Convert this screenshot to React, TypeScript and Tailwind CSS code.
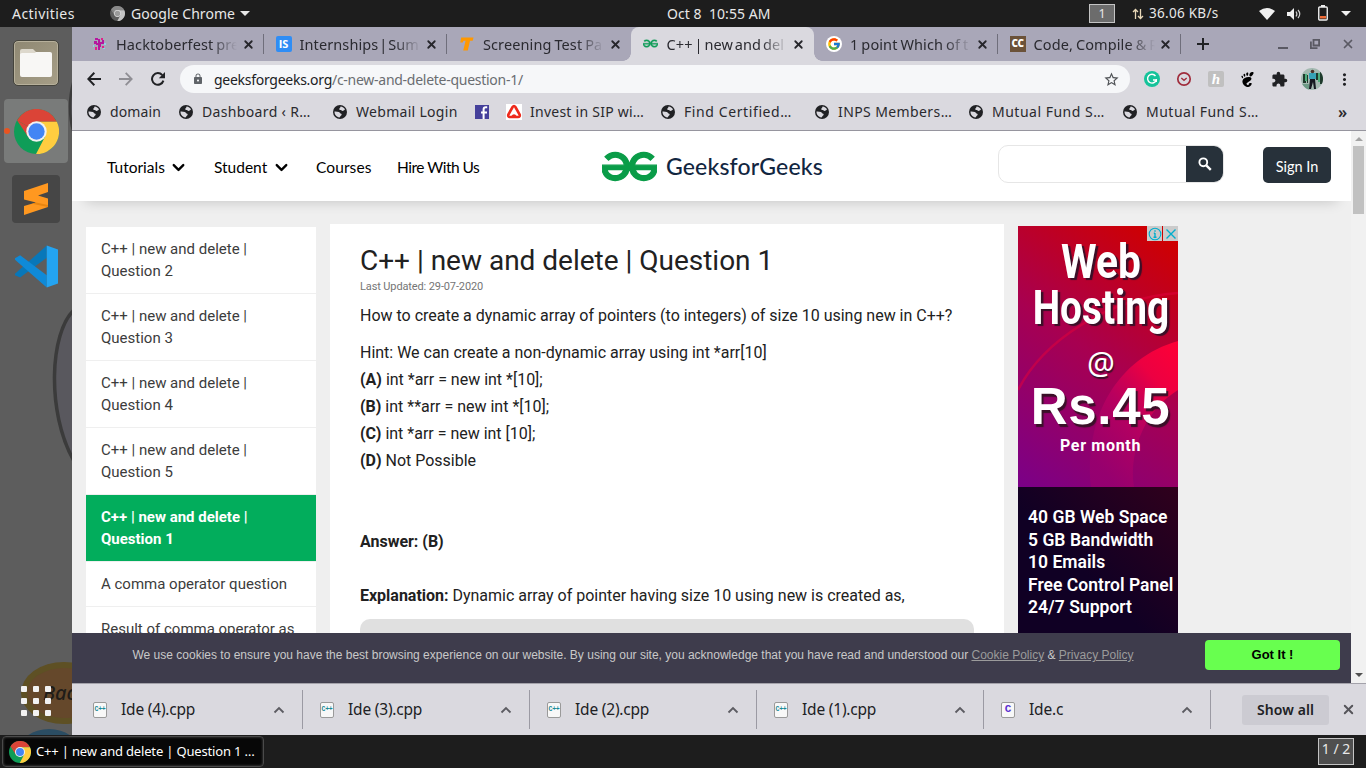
import type { ReactNode } from "react";
import { MdLock, MdStarBorder, MdExtension, MdMoreVert } from "react-icons/md";
import { FcGoogle } from "react-icons/fc";
import { SiGeeksforgeeks, SiGnome } from "react-icons/si";
import { X, ChevronDown } from "lucide-react";

function ChromeLogo({ className, gray = false }: { className: string; gray?: boolean }) {
  const c = gray ? ["#8a8a8a", "#5c5c5c", "#c4c4c4", "#dedede", "#9a9a9a"] : ["#db4437", "#0f9d58", "#ffcd40", "#f1f1f1", "#4285f4"];
  return (
    <svg viewBox="0 0 48 48" className={className}>
      <circle cx="24" cy="24" r="24" fill={c[1]} />
      <path d="M24 24 L3.2 12 A24 24 0 0 1 45.7 13.5 L24 13.5 Z" fill={c[0]} />
      <path d="M3.2 12 L14.8 29.2 L24 24 Z" fill={c[0]} />
      <path d="M24 13.5 H45.7 A24 24 0 0 1 23.5 48 L33.2 29.3 Z" fill={c[2]} />
      <circle cx="24" cy="24" r="10.9" fill={c[3]} />
      <circle cx="24" cy="24" r="8.7" fill={c[4]} />
    </svg>
  );
}

function Globe() {
  return (
    <svg viewBox="0 0 14 14" className="size-[14px] shrink-0">
      <circle cx="7" cy="7" r="7" fill="#202124" />
      <path d="M7.6 1.5 C9.4 1.6 11.3 2.8 12 4.4 C11.2 5 10.4 5.9 9.3 5.9 C8.6 5.9 8.7 5.1 7.9 5 C6.9 5 6.1 4.9 6.2 4 C6.3 3 7.5 2.9 7.6 1.5 Z" fill="#dad9df" />
      <path d="M1.5 6.6 C3 6.5 4.6 6.7 5.9 7.1 C6.8 7.4 6.6 8.3 7.5 8.4 C8.9 8.6 9.1 9.9 8.1 10.5 C7.1 11 7.4 12 6.4 12.5 C3.6 12.2 1.4 9.8 1.5 6.6 Z" fill="#dad9df" />
    </svg>
  );
}

const tabs: { title: string; icon: ReactNode; active?: boolean; line?: boolean; spacing?: string }[] = [
  {
    title: "Hacktoberfest pre",
    line: true,
    icon: (
      <svg viewBox="0 0 16 16" className="size-4">
        <path d="M3 2h3v2H3zM2 5h3v2h1V3h2v3h2V4h2v4H9v3H8v3H6V9H4V8H2z" fill="#b5179e" />
        <path d="M9 2h2v2H9zM10 10h2v2h-2zM3 11h2v3H3z" fill="#e0218a" />
        <path d="M12 7h2v2h-2zM11 12h2v1h-2zM1 9h1v2H1z" fill="#8fd0ea" />
      </svg>
    ),
  },
  { title: "Internships | Sum", spacing: "[word-spacing:-3px]", line: true, icon: <div className="flex size-4 items-center justify-center rounded-[2px] bg-[#2f8df5] font-['Open_Sans',sans-serif] text-[11px] font-bold text-white">IS</div> },
  {
    title: "Screening Test Pa",
    icon: (
      <svg viewBox="0 0 16 16" className="size-4">
        <path d="M2.2 1.5 H14.5 L13.7 4.7 H11 L8.8 14.5 H4.2 L6.6 4.7 H4.5 L3.8 6.5 H1.2 Z" fill="#ff9800" />
      </svg>
    ),
  },
  { title: "C++ | new and del", spacing: "[word-spacing:-2px]", active: true, icon: <SiGeeksforgeeks className="size-[15px] text-[#0f9d58]" stroke="#0f9d58" strokeWidth={0.6} /> },
  { title: "1 point Which of t", line: true, icon: <div className="flex size-4 items-center justify-center rounded-full bg-white"><FcGoogle className="size-[14px]" /></div> },
  { title: "Code, Compile & R", line: true, icon: <div className="flex size-4 items-center justify-center bg-[#6b5239] pb-px font-['Open_Sans',sans-serif] text-[10px] font-extrabold tracking-[-0.5px] text-white">CC</div> },
];

function Tab({ title, icon, active, line, spacing = "[word-spacing:-0.9px]" }: { title: string; icon: ReactNode; active?: boolean; line?: boolean; spacing?: string }) {
  return (
    <div className={active ? "relative flex h-[34px] w-[183.5px] items-center rounded-t-[8px] bg-[#dad9df] pl-3" : "relative flex h-[34px] w-[183.5px] items-center pl-3"}>
      {active && (
        <>
          <div className="absolute bottom-0 -left-2 size-2 bg-[radial-gradient(circle_at_0_0,#a9a7b8_7.5px,#dad9df_8px)]" />
          <div className="absolute -right-2 bottom-0 size-2 bg-[radial-gradient(circle_at_100%_0,#a9a7b8_7.5px,#dad9df_8px)]" />
        </>
      )}
      <div className="size-4 shrink-0">{icon}</div>
      <div className={`ml-2 w-[121px] overflow-hidden whitespace-nowrap text-[14.5px] leading-[20px] tracking-[0.1px] text-[#2a2a30] [mask-image:linear-gradient(to_right,black_78%,transparent)] ${spacing}`}>{title}</div>
      <X className="ml-[4.5px] size-[13px] shrink-0 text-[#26262b]" strokeWidth={3.3} />
      {line && <div className="absolute top-[7px] right-0 h-5 w-px bg-[#6f6e7b]" />}
    </div>
  );
}

function Bookmark({ label, width, icon, tracking = "tracking-[0.25px]" }: { label: string; width: string; icon?: ReactNode; tracking?: string }) {
  return (
    <div className={`flex shrink-0 items-center ${width}`}>
      {icon ?? <Globe />}
      <span className={`ml-[9px] whitespace-nowrap ${tracking}`}>{label}</span>
    </div>
  );
}

const downloads = ["Ide (4).cpp", "Ide (3).cpp", "Ide (2).cpp", "Ide (1).cpp", "Ide.c"];

function Download({ name }: { name: string }) {
  const cpp = name.endsWith("cpp");
  return (
    <div className="flex h-[39px] w-[227px] shrink-0 items-center border-r border-[#9b9aa3] pl-[17px]">
      <div className="flex h-4 w-[14px] items-center justify-center rounded-[2px] border border-[#9a9a9a] bg-[#f8f8f8] font-['Liberation_Mono',monospace] font-bold">
        {cpp ? <span className="text-[6.5px] tracking-[-0.3px] text-[#1a8a96]">C++</span> : <span className="text-[11px] text-[#5a2fd0]">C</span>}
      </div>
      <span className="ml-[14px] w-[152px] text-[15.5px] tracking-[-0.2px] text-[#202124]">{name}</span>
      <svg viewBox="0 0 12 8" className="h-[8px] w-3">
        <path d="M1.5 6.5 L6 2 L10.5 6.5" fill="none" stroke="#5c5c62" strokeWidth="1.8" />
      </svg>
    </div>
  );
}

function Dock() {
  return (
    <aside className="relative flex w-[72px] shrink-0 flex-col items-center overflow-hidden bg-[#5d5d5d]">
      <svg viewBox="0 0 72 708" className="absolute inset-0 h-[708px] w-[72px]">
        <path d="M74 283 C50 305 46 385 74 434" fill="#59585e" stroke="#3b3b3b" strokeWidth="3.5" />
        <ellipse cx="108" cy="80" rx="38" ry="60" fill="#59585e" stroke="#3b3b3b" strokeWidth="2.5" />
        <ellipse cx="64" cy="666" rx="43" ry="31" fill="#5e5024" />
        <ellipse cx="64" cy="666" rx="37" ry="25" fill="#65482b" />
        <ellipse cx="49" cy="724" rx="30" ry="22" fill="#2b4d63" />
        <text x="43" y="673" fontFamily="Noto Sans" fontStyle="italic" fontWeight="500" fontSize="20" fill="#201c18">Bac</text>
      </svg>
      <div className="relative mt-[13px] flex size-[46px] items-center justify-center rounded-[5px] border border-[#45443c] bg-linear-to-br from-[#8f8873] to-[#a69e87] shadow-[inset_0_0_0_1px_#b7b09b]">
        <svg viewBox="0 0 32 28" className="h-7 w-8">
          <path d="M0 2 Q0 0 2 0 H13 L16 3 V9 H0 Z" fill="#ddd8cc" />
          <rect y="4" width="32" height="24" rx="2" fill="#f8f7f5" />
          <path d="M0 6 Q0 5 2 5 H14 L16 3 H30 Q32 3 32 5 V10 H0Z" fill="#f8f7f5" />
        </svg>
      </div>
      <div className="relative mt-[13px] flex h-16 w-16 items-center justify-center rounded-[4px] bg-[#797b7a]">
        <ChromeLogo className="size-[45px]" />
        <span className="absolute top-[29px] left-0 size-[6px] rounded-full bg-[#e95420]" />
      </div>
      <div className="relative mt-3 flex size-12 items-center justify-center rounded-[4px] bg-[#464646]">
        <svg viewBox="0 0 24 32" className="h-8 w-6">
          <path d="M0 8 L24 0 V9 L14 12.5 L24 15.5 V24 L0 32 V23 L12 19.5 L0 16.5 Z" fill="#ff9820" />
          <path d="M12 19.5 L24 22 V24 L8 20.7 Z" fill="#e9850f" />
        </svg>
      </div>
      <svg viewBox="0 0 42 42" className="relative mt-[22px] size-[43px]">
        <path d="M0 28 L31 0.5 V12.5 L5 31.8 L0 29.5 Z" fill="#0877b9" />
        <path d="M0 13 L5 10 L31 29.5 V41.5 L0 14.5 Z" fill="#0f8ad8" />
        <path d="M31 0.5 L42 4.5 V37.5 L31 41.5 Z" fill="#24a4f1" />
      </svg>
      <div className="relative mt-auto mb-[19px] grid grid-cols-3 gap-[6px]">
        {[0, 1, 2, 3, 4, 5, 6, 7, 8].map((i) => (
          <span key={i} className="size-[6px] rounded-[1px] bg-[#f2f2f2]" />
        ))}
      </div>
    </aside>
  );
}

const sidebar = [
  "C++ | new and delete | Question 2",
  "C++ | new and delete | Question 3",
  "C++ | new and delete | Question 4",
  "C++ | new and delete | Question 5",
  "C++ | new and delete | Question 1",
  "A comma operator question",
  "Result of comma operator as",
];

function Advert() {
  return (
    <div className="relative mt-[25px] ml-[14px] w-40 shrink-0 text-center text-white">
      <div className="relative h-[261px] overflow-hidden bg-[linear-gradient(35deg,#7a0088_0%,#a80050_50%,#cf0000_95%)]">
        <svg viewBox="0 0 160 261" className="absolute inset-0 h-[261px] w-40">
          <defs>
            <linearGradient id="arc" x1="1" y1="0" x2="0.3" y2="1">
              <stop offset="0" stopColor="#ff0035" />
              <stop offset="0.3" stopColor="#ec0042" />
              <stop offset="0.6" stopColor="#bd0060" stopOpacity="0.8" />
              <stop offset="1" stopColor="#a0006c" stopOpacity="0.5" />
            </linearGradient>
          </defs>
          <path d="M160 115 C100 132 66 190 73 261 H116 C110 222 130 182 160 164 Z" fill="url(#arc)" />
          <path d="M0 164 C25 115 90 72 160 67" fill="none" stroke="#e0003c" strokeOpacity="0.55" strokeWidth="2.5" />
        </svg>
        <div className="relative h-[261px] font-['Roboto',sans-serif] font-bold">
          <div className="h-[13px]" />
          <div className="ml-[6px] h-[46px] scale-x-[0.84] text-[48.5px] leading-[46px] whitespace-nowrap [text-shadow:3px_2px_1px_#3a1028]">Web</div>
          <div className="ml-[-14px] h-[46px] w-[194px] scale-x-[0.8] text-[48.5px] leading-[46px] whitespace-nowrap [text-shadow:3px_2px_1px_#3a1028]">Hosting</div>
          <div className="mt-[12px] h-10 pl-[6px] font-['Noto_Sans',sans-serif] text-[31px] leading-[38px] font-normal [text-shadow:1px_2px_1px_#3a1028]">@</div>
          <div className="h-[48px] pl-[5px] font-['Liberation_Sans',sans-serif] text-[51px] leading-[48px] tracking-[0.7px] [text-shadow:2px_3px_1px_#3a1028]">Rs.45</div>
          <div className="pt-[3px] pl-[5px] text-[16px] leading-[24px] tracking-[0.7px]">Per month</div>
        </div>
      </div>
      <div className="h-[200px] bg-[linear-gradient(45deg,#100024_50%,#30001c)] pt-[19px] pl-[10px] text-left font-['Roboto',sans-serif] text-[17.5px] leading-[22.5px] font-semibold tracking-[0.03px] whitespace-nowrap">
        <div>40 GB Web Space</div>
        <div>5 GB Bandwidth</div>
        <div>10 Emails</div>
        <div>Free Control Panel</div>
        <div>24/7 Support</div>
      </div>
      <div className="absolute top-0 right-0 flex gap-px">
        <div className="flex size-[15px] items-center justify-center bg-[#cbcbcb]">
          <svg viewBox="0 0 14 14" className="size-[14px]" fill="none" stroke="#00aecd">
            <circle cx="7" cy="7" r="5.8" strokeWidth="1.1" />
            <path d="M7 3.2v1.5M7 6v4.3M5.8 6.2h1.2M5.5 10.3h3" strokeWidth="1.4" />
          </svg>
        </div>
        <div className="flex size-[15px] items-center justify-center bg-[#cbcbcb]">
          <svg viewBox="0 0 14 14" className="size-[14px]" fill="none" stroke="#00aecd" strokeWidth="1.4">
            <path d="M2.5 2.5 L11.5 11.5 M11.5 2.5 L2.5 11.5" />
          </svg>
        </div>
      </div>
    </div>
  );
}

function Page() {
  return (
    <div className="flex h-[552px]">
      <div className="flex w-[1279px] flex-col">
        <div className="flex min-h-0 flex-1 flex-col overflow-hidden bg-[#efefef]">
          <header className="z-10 flex h-[70px] shrink-0 items-center bg-white pl-[35px] font-['Lato',sans-serif] text-[15.5px] text-black shadow-[0_14px_14px_-14px_rgba(0,0,0,0.2)]">
            <div className="mt-[3px] flex w-[107px] items-center"><span className="w-[62px]">Tutorials</span><ChevronDown className="size-[19px]" strokeWidth={3} /></div>
            <div className="mt-[3px] flex w-[102px] items-center"><span className="w-[58px]">Student</span><ChevronDown className="size-[19px]" strokeWidth={3} /></div>
            <span className="mt-[3px] w-[81px] tracking-[0.1px]">Courses</span>
            <span className="mt-[3px] w-[205px] tracking-[-0.5px]">Hire With Us</span>
            <SiGeeksforgeeks className="size-[55px] shrink-0 text-[#0a9c48]" stroke="#0a9c48" strokeWidth={0.55} />
            <span className="ml-[9px] w-[332px] text-[23px] font-medium tracking-[0.15px] text-[#12263f]">GeeksforGeeks</span>
            <div className="mb-[5px] flex h-[38px] w-[226px] shrink-0 overflow-hidden rounded-[10px] border border-[#e6e6e6]">
              <div className="w-[187px]" />
              <div className="flex flex-1 items-center justify-center bg-[#27313a]">
                <svg viewBox="0 0 14 14" className="size-[14px]" fill="none" stroke="white">
                  <circle cx="5.3" cy="5.3" r="3.9" strokeWidth="1.9" />
                  <path d="M8.3 8.3 L12.8 12.8" strokeWidth="2.4" />
                </svg>
              </div>
            </div>
            <div className="mb-[2px] ml-[39px] flex h-9 w-[68px] items-center justify-center rounded-[5px] bg-[#27313a] pt-[3px] text-[14.5px] text-white">Sign In</div>
          </header>
          <div className="flex flex-1">
            <nav className="mt-[26px] ml-[14px] w-[230px] shrink-0 font-['Roboto',sans-serif] text-[15px] leading-[22px] text-[#3c3c3c]">
              {sidebar.map((t, i) => (
                <div key={t} className={i === 4 ? "border-b border-[#efefef] bg-[#02ad5c] py-[11px] pr-[50px] pl-[15px] font-bold text-white" : i < 4 ? "border-b border-[#efefef] bg-white py-[11px] pr-[50px] pl-[15px]" : "border-b border-[#efefef] bg-white py-[11px] pl-[15px]"}>
                  {t}
                </div>
              ))}
            </nav>
            <main className="mt-[23px] ml-[14px] w-[674px] shrink-0 bg-white px-[30px] pt-[19px] font-['Roboto',sans-serif] text-[16px] leading-[27px] tracking-[-0.01px] text-[#212121]">
              <h1 className="text-[28px] leading-[36px] tracking-[-0.01px]">C++ | new and delete | Question 1</h1>
              <div className="text-[11px] leading-4 tracking-[-0.12px] text-[#757575]">Last Updated: 29-07-2020</div>
              <p className="mt-[7px]">How to create a dynamic array of pointers (to integers) of size 10 using new in C++?</p>
              <p className="mt-[10px]">Hint: We can create a non-dynamic array using int *arr[10]</p>
              <p><b>(A)</b> int *arr = new int *[10];</p>
              <p><b>(B)</b> int **arr = new int *[10];</p>
              <p><b>(C)</b> int *arr = new int [10];</p>
              <p><b>(D)</b> Not Possible</p>
              <p className="mt-[54px] font-bold">Answer: (B)</p>
              <p className="mt-[27px]"><b>Explanation:</b> Dynamic array of pointer having size 10 using new is created as,</p>
              <div className="mt-[10px] h-20 rounded-[10px] bg-[#e0e0e0]" />
            </main>
            <Advert />
          </div>
        </div>
        <div className="flex h-[50px] shrink-0 bg-[#3e3c4c] pl-[60.5px] font-['Liberation_Sans',sans-serif] text-[12px] text-[#c9c9c9]">
          <p className="mt-[14px] w-[1072.5px] leading-[16px] whitespace-nowrap">
            We use cookies to ensure you have the best browsing experience on our website. By using our site, you acknowledge that you have read and understood our <u className="text-[#9b9b9b]">Cookie Policy</u> &amp; <u className="text-[#9b9b9b]">Privacy Policy</u>
          </p>
          <div className="mt-[7px] flex h-[30px] w-[135px] items-center justify-center rounded-[4px] bg-[#68ff4f] text-[13px] font-bold text-black">Got It !</div>
        </div>
      </div>
      <div className="flex w-[15px] flex-col items-center bg-[#f1f1f1]">
        <div className="mt-[6px] size-0 border-x-4 border-b-4 border-x-transparent border-b-[#a3a3a3]" />
        <div className="mt-[5px] h-[68px] w-[11px] bg-[#c1c1c1]" />
        <div className="mt-auto mb-[6px] size-0 border-x-4 border-t-4 border-x-transparent border-t-[#505050]" />
      </div>
    </div>
  );
}

function Extensions() {
  return (
    <div className="ml-[14px] flex items-center">
      <svg viewBox="0 0 16 16" className="size-4">
        <circle cx="8" cy="8" r="8" fill="#15c39a" />
        <path d="M11.5 5 A4.4 4.4 0 1 0 12.2 9 H9" fill="none" stroke="white" strokeWidth="1.4" />
        <path d="M12.3 8 V11" stroke="white" strokeWidth="1.3" />
      </svg>
      <svg viewBox="0 0 16 16" className="ml-4 size-4" fill="none" stroke="#a02c3c">
        <circle cx="8" cy="8" r="6.2" strokeWidth="1.7" />
        <path d="M5.3 7 L8 9.3 L10.7 7" strokeWidth="1.4" />
      </svg>
      <div className="ml-4 flex size-4 items-center justify-center rounded-[2px] bg-[#c0c0c0] font-['Liberation_Serif',serif] text-[15px] font-bold text-white italic">h</div>
      <SiGnome className="ml-4 size-[15px] text-black" />
      <MdExtension className="ml-4 size-[17px] text-[#202124]" />
      <svg viewBox="0 0 22 22" className="ml-[13px] size-[22px]">
        <clipPath id="av"><circle cx="11" cy="11" r="11" /></clipPath>
        <g clipPath="url(#av)">
          <rect width="22" height="22" fill="#a3b9b0" />
          <path d="M2 6h3v9H2zM6 7h1v8H6zM15 5h2v7h-2zM19 4h3v12h-3z" fill="#1e3a2c" />
          <path d="M4 6h2v7H4zM17 5h2v9h-2z" fill="#4fae7c" />
          <path d="M8 5h7v6H8z" fill="#37a3b6" />
          <path d="M9 11h5l1 10h-2l-1-7-2 7H8z" fill="#15181f" />
          <path d="M0 16h8v6H0z" fill="#6d9a86" />
          <circle cx="11.5" cy="3.5" r="1.8" fill="#4c342a" />
        </g>
      </svg>
      <MdMoreVert className="ml-[12px] size-[19px] text-[#202124]" />
    </div>
  );
}

export default function App() {
  return (
    <div className="flex h-[768px] w-[1366px] flex-col overflow-hidden bg-[#1d1d1d] font-['Noto_Sans',sans-serif]">
      <div className="flex h-[27px] shrink-0 items-center text-[14px] leading-[27px] text-[#e8e8e8]">
        <span className="w-[110px] pl-3 tracking-[0.45px]">Activities</span>
        <ChromeLogo className="size-[15px]" gray />
        <span className="ml-[6px] w-[109px] tracking-[0.05px] whitespace-nowrap">Google Chrome</span>
        <div className="size-0 border-x-[5px] border-t-[5px] border-x-transparent border-t-[#e8e8e8]" />
        <span className="ml-[417px] w-[422px] text-[14px] tracking-[0.05px] whitespace-pre">Oct 8  10:55 AM</span>
        <div className="flex h-[19px] w-[26px] items-center justify-center border border-[#c4c4c4] bg-[#6c6c6c] text-[12.5px]">1</div>
        <svg viewBox="0 0 12 12" className="ml-[17px] size-3" fill="none" stroke="#e8d8b8" strokeWidth="1.3">
          <path d="M3.5 11V1.5M1 4L3.5 1.5L6 4M8.5 1V10.5M6 8L8.5 10.5L11 8" />
        </svg>
        <span className="ml-[5px] w-[110px] text-[13.5px] tracking-[0.28px] whitespace-nowrap">36.06 KB/s</span>
        <svg viewBox="0 0 16 12" className="h-3 w-4"><path d="M0 3 Q8 -3 16 3 L8 12 Z" fill="#f0f0f0" /></svg>
        <svg viewBox="0 0 16 14" className="ml-3 h-[14px] w-4">
          <path d="M0 5h3l4-4v12L3 9H0z" fill="#f0f0f0" />
          <path d="M9 4.5Q10.8 7 9 9.5M11 3Q14.5 7 11 11" fill="none" stroke="#d0d0d0" strokeWidth="1.2" />
        </svg>
        <svg viewBox="0 0 10 16" className="ml-[15px] h-4 w-[10px] -mt-px">
          <rect x="3" width="4" height="2" fill="#eee" />
          <rect x="0.75" y="2" width="8.5" height="13" rx="1" fill="none" stroke="#eee" strokeWidth="1.4" />
          <rect x="2" y="11" width="6" height="2.5" fill="#ee6a35" />
        </svg>
        <div className="ml-[13px] size-0 border-x-[5px] border-t-[5px] border-x-transparent border-t-[#f0f0f0]" />
      </div>

      <div className="flex h-[708px] shrink-0">
        <Dock />
        <div className="flex w-[1294px] flex-col">
          <div className="flex h-[34px] shrink-0 items-center bg-[#a9a7b8] pl-2">
            {tabs.map((t) => <Tab key={t.title} {...t} />)}
            <svg viewBox="0 0 12 12" className="ml-[16px] size-3" stroke="#202124" strokeWidth="2">
              <path d="M6 0V12M0 6H12" />
            </svg>
            <div className="mt-2 ml-[69px] h-[2px] w-[10px] bg-[#5a5963]" />
            <svg viewBox="0 0 10 10" className="ml-[22px] size-[10px]" fill="none" stroke="#5a5963" strokeWidth="1.8">
              <path d="M3.5 0.9H9.1V6.5H3.5ZM0.9 2.5V9.1H7.5" />
            </svg>
            <X className="ml-[21px] size-[14px] text-[#5a5963]" strokeWidth={3} />
          </div>

          <div className="flex h-9 shrink-0 items-center bg-[#dad9df] pl-[15px]">
            <svg viewBox="0 0 14 14" className="size-[14px]" fill="none" stroke="#202124" strokeWidth="2">
              <path d="M14 7H1.5M7.3 0.8L1.3 7L7.3 13.2" />
            </svg>
            <svg viewBox="0 0 14 14" className="ml-[18px] size-[14px]" fill="none" stroke="#8f8e94" strokeWidth="1.8">
              <path d="M0 7H12.5M6.7 0.8L12.7 7L6.7 13.2" />
            </svg>
            <svg viewBox="0 0 14 14" className="ml-[18px] size-[14px]">
              <path d="M12.4 8.6 A5.8 5.8 0 1 1 11.3 3.2" fill="none" stroke="#202124" strokeWidth="2" />
              <path d="M14 0V6.2H7.8Z" fill="#202124" />
            </svg>
            <div className="ml-[15px] flex h-7 w-[950px] shrink-0 items-center rounded-full bg-[#f6f7f9] pr-[10px] pl-3">
              <MdLock className="size-3 text-[#5f6368]" />
              <span className="ml-[10px] text-[14px] tracking-[-0.27px] whitespace-nowrap text-[#6a6d71]"><span className="text-[#202124]">geeksforgeeks.org</span>/c-new-and-delete-question-1/</span>
              <MdStarBorder className="ml-auto size-[17px] text-[#4f5256]" />
            </div>
            <Extensions />
          </div>

          <div className="flex h-[34px] shrink-0 items-center border-b border-[#96959e] bg-[#dad9df] pb-[4px] pl-[15px] text-[14px] text-[#2a2a2e]">
            <Bookmark label="domain" width="w-[92px]" tracking="tracking-[0.1px]" />
            <Bookmark label="Dashboard ‹ R…" width="w-[154px]" tracking="tracking-[0.35px]" />
            <Bookmark label="Webmail Login" width="w-[142px]" tracking="tracking-[0.3px]" />
            <svg viewBox="0 0 14 14" className="mr-[17px] size-[14px]">
              <rect width="14" height="14" fill="#45409b" />
              <path d="M12.2 2.2H10.8C9.200 2.200 8.600 3 8.600 4.400V14M6 7.400H12" fill="none" stroke="white" strokeWidth="2" />
            </svg>
            <Bookmark
              label="Invest in SIP wi…"
              width="w-[155px]"
              tracking="tracking-[0.25px]"
              icon={
                <svg viewBox="0 0 16 16" className="-mr-px size-4 shrink-0">
                  <rect width="16" height="16" fill="white" />
                  <path d="M6.6 3 Q8 1 9.4 3 L13.6 10.5 Q14.4 13 12 13 H4 Q1.6 13 2.4 10.5 Z" fill="white" stroke="#ee2a1c" strokeWidth="2.6" />
                  <path d="M5 12.5 Q8 8 11 12.5Z" fill="#ee2a1c" />
                </svg>
              }
            />
            <Bookmark label="Find Certified…" width="w-[154px]" tracking="tracking-[0.6px]" />
            <Bookmark label="INPS Members…" width="w-[154px]" tracking="tracking-[0.4px]" />
            <Bookmark label="Mutual Fund S…" width="w-[154px]" tracking="tracking-[0.5px]" />
            <Bookmark label="Mutual Fund S…" width="w-[154px]" tracking="tracking-[0.5px]" />
            <span className="ml-[61px] text-[16px] leading-[20px] font-semibold">»</span>
          </div>

          <Page />

          <div className="flex h-[52px] shrink-0 items-center border-t border-[#a3a2aa] bg-[#dad9df] pl-1">
            {downloads.map((d) => <Download key={d} name={d} />)}
            <div className="ml-[31px] flex h-[30px] w-[87px] items-center justify-center rounded-[3px] bg-[#cccbd2] text-[14px] font-semibold tracking-[0.1px] text-[#202124]">Show all</div>
            <X className="ml-3 size-[15px] text-[#55555a]" strokeWidth={3} />
          </div>
        </div>
      </div>

      <div className="flex h-[33px] shrink-0 items-start justify-between pt-px pr-[12px] pl-[2px]">
        <div className="flex h-[31px] w-[262px] items-center rounded-[4px] border border-[#4a4a4a] bg-[#070707] pl-[6px] text-[13px] text-white shadow-[inset_0_0_2px_1px_#2c2c2c]">
          <ChromeLogo className="size-[22px]" />
          <span className="ml-[5px] tracking-[-0.17px] whitespace-nowrap">C++ | new and delete | Question 1 …</span>
        </div>
        <div className="mt-[2px] flex h-[27px] w-9 justify-center border border-[#c4c4c4] bg-[#4f4f4f] text-[14px] leading-[19px] text-[#e8e8e8]">1 / 2</div>
      </div>
    </div>
  );
}
